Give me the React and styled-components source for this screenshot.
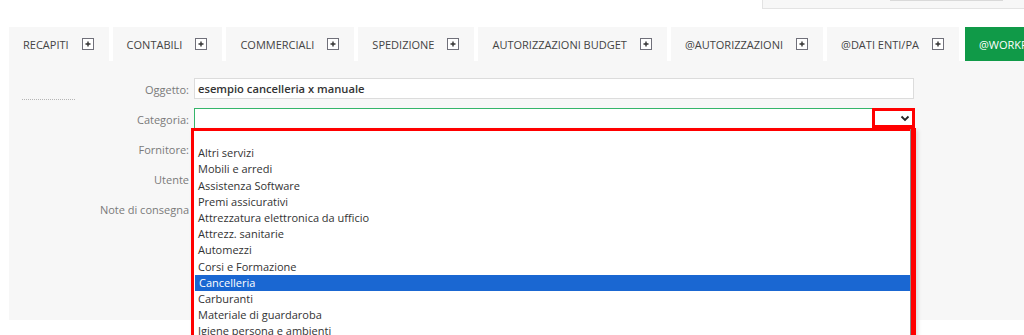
import React from 'react'
import styled, { createGlobalStyle } from 'styled-components'

const GlobalStyle = createGlobalStyle`
  html, body {
    margin: 0;
    padding: 0;
    background: #fff;
    overflow: hidden;
  }
  body {
    font-family: "Open Sans", "Liberation Sans", sans-serif;
    color: #333;
  }
  * {
    box-sizing: border-box;
  }
`

const Page = styled.div`
  width: 1024px;
  height: 335px;
  overflow: hidden;
`

const Header = styled.div`
  height: 27px;
  display: flex;
  justify-content: flex-end;
  align-items: flex-start;
`

const SearchArea = styled.div`
  width: 262px;
  height: 9px;
  background: #f7f7f7;
  border-left: 1px solid #e3e3e3;
  border-bottom: 1px solid #e3e3e3;
  display: flex;
  justify-content: flex-end;
  padding-right: 21px;
`

const SearchField = styled.div`
  width: 113px;
  height: 1px;
  background: #d9d9d9;
`

const TabBar = styled.div`
  display: flex;
  gap: 4px;
  padding-left: 9px;
  height: 34px;
`

const Tab = styled.div`
  display: flex;
  align-items: center;
  gap: 13px;
  height: 34px;
  padding: 0 15px 0 14px;
  flex-shrink: 0;
  white-space: nowrap;
  font-size: 11px;
  text-transform: uppercase;
  background: ${p => (p.$active ? '#109a48' : '#f7f7f7')};
  color: ${p => (p.$active ? '#fff' : '#444')};
  margin-left: ${p => (p.$active ? '2px' : '0')};
`

const PlusBox = () => (
  <svg width="12" height="12" viewBox="0 0 12 12">
    <rect x="0.5" y="0.5" width="11" height="11" fill="#fff" stroke="#70707a" />
    <path d="M6 3.5v5M3.5 6h5" stroke="#333" strokeWidth="1.4" />
  </svg>
)

const Panel = styled.div`
  margin-left: 9px;
  height: 259px;
  background: #f7f7f7;
  display: flex;
`

const Side = styled.div`
  width: 71px;
  padding: 38px 0 0 13px;
  flex-shrink: 0;
`

const Dotted = styled.div`
  width: 53px;
  border-top: 1px dotted #b5b5b5;
`

const Form = styled.div`
  display: grid;
  grid-template-columns: 110px 720px;
  grid-auto-rows: 22px;
  column-gap: 4px;
  row-gap: 8px;
  padding-top: 17px;
`

const Label = styled.div`
  font-size: 11px;
  color: #7a7a7a;
  text-align: right;
  white-space: nowrap;
  line-height: 22px;
  padding-top: 1px;
  padding-right: 1px;
`

const Input = styled.div`
  height: 21px;
  background: #fff;
  border: 1px solid #dcdcdc;
  font-size: 11.2px;
  font-weight: 600;
  color: #333;
  padding-left: 3px;
  line-height: 19px;
`

const SelectWrap = styled.div`
  position: relative;
  height: 22px;
`

const Select = styled.div`
  height: 22px;
  background: #fff;
  border: 1px solid #35b56a;
`

const ArrowMark = styled.div`
  position: absolute;
  top: 0;
  right: -1px;
  width: 43px;
  height: 20px;
  border: 3px solid #ff0000;
  background: #fff;
  display: flex;
  align-items: center;
  justify-content: flex-end;
  padding-right: 2px;
  z-index: 3;
`

const ListBox = styled.div`
  position: absolute;
  top: 20px;
  left: -3px;
  width: 725px;
  height: 230px;
  border: 3px solid #ff0000;
  border-right-width: 5px;
  background: #fff;
  z-index: 2;
  box-shadow: 2px 2px 4px rgba(0, 0, 0, 0.12);
`

const OptionList = styled.div`
  height: 100%;
  border-right: 1px solid #8a8a8a;
  margin-top: -2px;
`

const Option = styled.div`
  height: 16.2px;
  line-height: 16.2px;
  font-size: 11px;
  padding-left: 4px;
  white-space: nowrap;
  background: ${p => (p.$selected ? '#1a67d2' : 'transparent')};
  color: ${p => (p.$selected ? '#fff' : '#333')};
  margin-left: ${p => (p.$selected ? '1px' : '0')};
`

const Field = styled.div`
  height: 22px;
  background: #fff;
  border: 1px solid #dcdcdc;
`

const tabs = [
  'Recapiti',
  'Contabili',
  'Commerciali',
  'Spedizione',
  'Autorizzazioni budget',
  '@Autorizzazioni',
  '@Dati enti/PA',
]

const categories = [
  '',
  'Altri servizi',
  'Mobili e arredi',
  'Assistenza Software',
  'Premi assicurativi',
  'Attrezzatura elettronica da ufficio',
  'Attrezz. sanitarie',
  'Automezzi',
  'Corsi e Formazione',
  'Cancelleria',
  'Carburanti',
  'Materiale di guardaroba',
  'Igiene persona e ambienti',
  'Manutenzioni',
]

export default function App() {
  return (
    <Page>
      <GlobalStyle />
      <Header>
        <SearchArea>
          <SearchField />
        </SearchArea>
      </Header>
      <TabBar>
        {tabs.map(t => (
          <Tab key={t}>
            {t}
            <PlusBox />
          </Tab>
        ))}
        <Tab $active>@Workflow</Tab>
      </TabBar>
      <Panel>
        <Side>
          <Dotted />
        </Side>
        <Form>
          <Label>Oggetto:</Label>
          <Input>esempio cancelleria x manuale</Input>

          <Label>Categoria:</Label>
          <SelectWrap>
            <Select />
            <ArrowMark>
              <svg width="10" height="7" viewBox="0 0 10 7">
                <path d="M1.5 1.5l3.5 3.5 3.5-3.5" fill="none" stroke="#222" strokeWidth="1.8" />
              </svg>
            </ArrowMark>
            <ListBox>
              <OptionList>
                {categories.map((c, i) => (
                  <Option key={i} $selected={c === 'Cancelleria'}>
                    {c}
                  </Option>
                ))}
              </OptionList>
            </ListBox>
          </SelectWrap>

          <Label>Fornitore:</Label>
          <Field />

          <Label>Utente</Label>
          <Field />

          <Label>Note di consegna</Label>
          <Field />
        </Form>
      </Panel>
    </Page>
  )
}
